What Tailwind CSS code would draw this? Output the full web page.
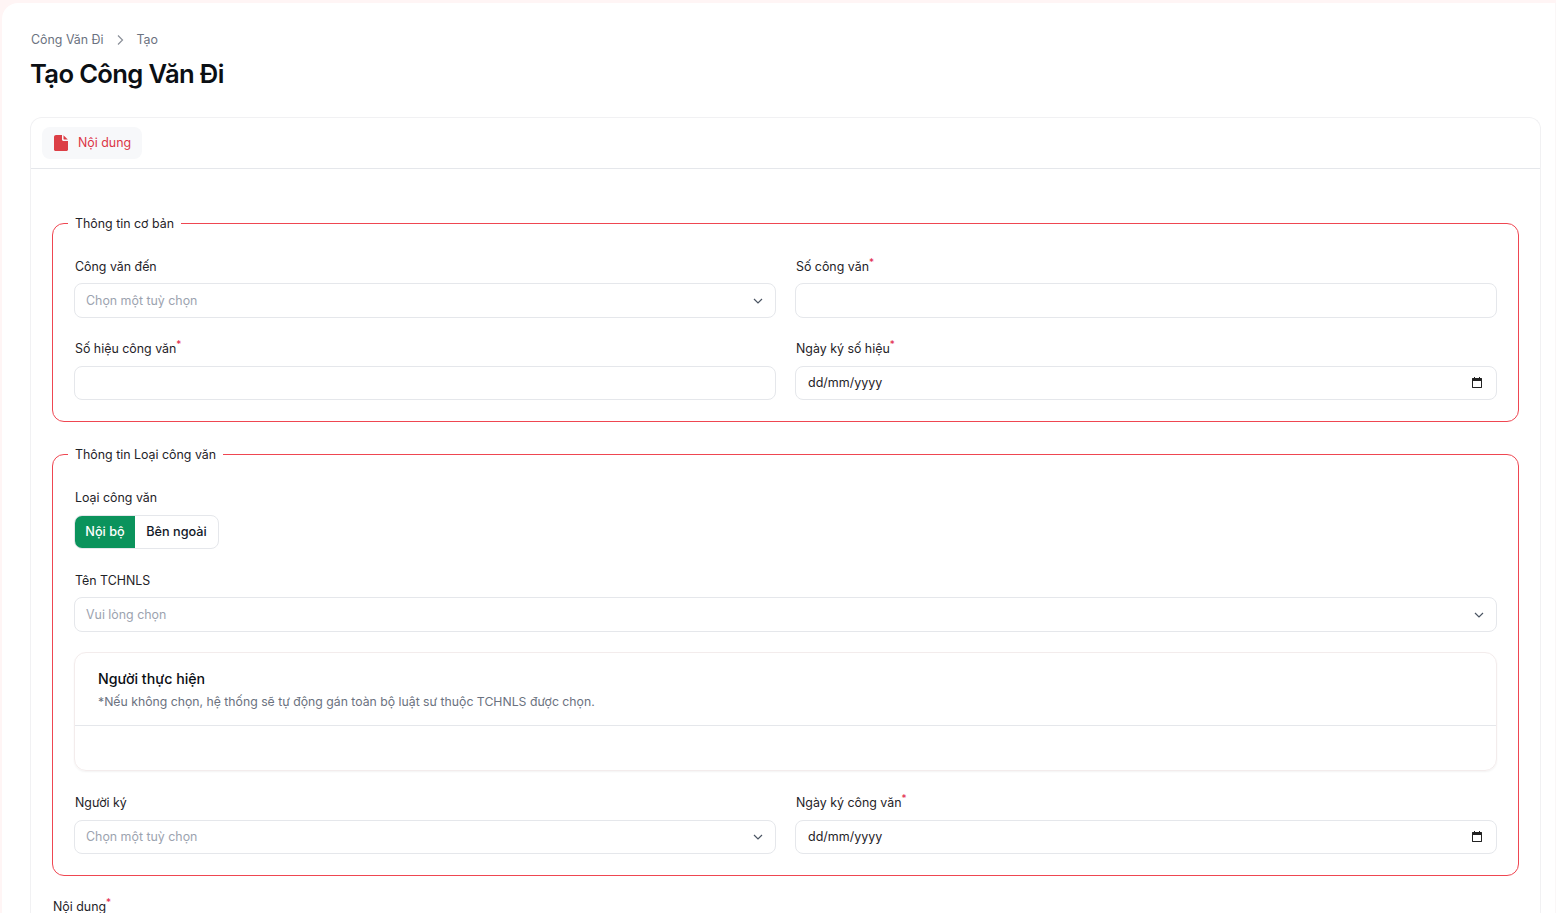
<!DOCTYPE html>
<html lang="vi">
<head>
<meta charset="utf-8">
<title>Tạo Công Văn Đi</title>
<script src="https://cdn.jsdelivr.net/npm/@tailwindcss/browser@4"></script>
</head>
<body class="h-[913px] overflow-hidden bg-[#fff5f5] pt-[3px] pl-[2px] font-['Inter','Liberation_Sans',sans-serif] text-[12.4px] leading-5 text-[#1f2328]">
<main class="h-[910px] overflow-hidden rounded-tl-2xl bg-white pl-[28px] pr-[14px] pt-[27px] shadow-[inset_-1px_0_0_#faf7f7]">
  <nav class="flex h-5 items-center text-[#6b7280]">
    <span class="ml-[1px]">Công Văn Đi</span>
    <svg class="mx-[11px] h-[12px] w-[12px]" viewBox="0 0 12 12" fill="none" stroke="#8a8f98" stroke-width="1.2"><path d="M3 1.500 7.500 6 3 10.500"/></svg>
    <span class="ml-[-1px]">Tạo</span>
  </nav>
  <h1 class="mt-[6px] text-[25.6px] font-semibold leading-[36px] tracking-[-0.65px] text-[#0b0f14]">Tạo Công Văn Đi</h1>
  <section class="mt-[25px] w-[1511px] rounded-t-xl border border-b-0 border-[#f1f1f3]">
    <div class="flex h-[51px] items-center border-b border-[#e5e7eb] pl-[11px]">
      <div class="flex h-[32px] items-center gap-[10px] rounded-lg bg-[#f7f8fa] pl-[12px] pr-[11px] text-[#dc3545]">
        <svg class="h-[16px] w-[14px]" viewBox="0 0 14 16" fill="#dc3f46"><path d="M2 0h6v4.500c0 .8.700 1.500 1.500 1.500H14v8.500c0 .8-.7 1.500-1.500 1.500h-11C.7 16 0 15.300 0 14.500V2C0 .9.900 0 2 0Z"/><path d="M9.500 0.300 13.800 4.600H10c-.3 0-.5-.2-.5-.5Z"/></svg>
        <span>Nội dung</span>
      </div>
    </div>
    <div class="px-[21px] pt-[43px]">
      <fieldset class="h-[210px] rounded-xl border border-[#ef4651] px-[21px]">
        <legend class="ml-[-6px] px-[7px] pt-[2px] leading-[20px]">Thông tin cơ bản</legend>
        <div class="mt-[22px] grid grid-cols-2 gap-x-[19px] gap-y-[20px]">
          <div>
            <label class="ml-[1px] block h-5 pt-[1px]">Công văn đến</label>
            <button class="mt-[7px] flex h-[35px] w-full items-center justify-between rounded-lg border border-[#e5e7eb] pl-[11px] pr-[12px] text-[#9ca3af]"><span>Chọn một tuỳ chọn</span><svg class="h-[10px] w-[10px]" viewBox="0 0 10 10" fill="none" stroke="#4b5563" stroke-width="1.200"><path d="M1 3 5 7 9 3"/></svg></button>
          </div>
          <div>
            <label class="ml-[1px] block h-5 pt-[1px]">Số công văn<sup class="text-[10px] leading-none text-[#e11d48]">*</sup></label>
            <input class="mt-[7px] block h-[35px] w-full rounded-lg border border-[#e5e7eb]" type="text">
          </div>
          <div>
            <label class="ml-[1px] block h-5 pt-[1px]">Số hiệu công văn<sup class="text-[10px] leading-none text-[#e11d48]">*</sup></label>
            <input class="mt-[8px] block h-[34px] w-full rounded-lg border border-[#e5e7eb]" type="text">
          </div>
          <div>
            <label class="ml-[1px] block h-5 pt-[1px]">Ngày ký số hiệu<sup class="text-[10px] leading-none text-[#e11d48]">*</sup></label>
            <div class="mt-[8px] flex h-[34px] items-center justify-between rounded-lg border border-[#e5e7eb] pl-[12px] pr-[13px]"><span class="text-[12.5px]">dd/mm/yyyy</span><svg class="h-[12px] w-[12px]" viewBox="0 0 12 12"><path fill="#222" d="M2 1h1V0h1v1h4V0h1v1h1.500c.3 0 .5.200.5.500v9c0 .3-.2.500-.5.500h-9c-.3 0-.5-.2-.5-.5v-9c0-.3.200-.5.500-.5Z"/><rect x="2" y="4" width="8" height="6" fill="#fff"/></svg></div>
          </div>
        </div>
      </fieldset>
      <fieldset class="mt-[21px] h-[433px] rounded-xl border border-[#ef4651] px-[21px]">
        <legend class="ml-[-6px] px-[7px] pt-[2px] leading-[20px]">Thông tin Loại công văn</legend>
        <label class="ml-[1px] mt-[22px] block h-5 pt-[1px]">Loại công văn</label>
        <div class="mt-[8px] flex h-[34px] w-[145px] overflow-hidden rounded-lg border border-[#e5e7eb] text-[12.7px] font-medium">
          <span class="flex w-[60px] items-center justify-center bg-[#0b935c] text-white">Nội bộ</span>
          <span class="flex flex-1 items-center justify-center text-[#111827]">Bên ngoài</span>
        </div>
        <label class="ml-[1px] mt-[21px] block h-5 pt-[1px]">Tên TCHNLS</label>
        <button class="mt-[7px] flex h-[35px] w-full items-center justify-between rounded-lg border border-[#e5e7eb] pl-[11px] pr-[12px] text-[#9ca3af]"><span>Vui lòng chọn</span><svg class="h-[10px] w-[10px]" viewBox="0 0 10 10" fill="none" stroke="#4b5563" stroke-width="1.200"><path d="M1 3 5 7 9 3"/></svg></button>
        <div class="mt-[20px] h-[119px] rounded-xl border border-[#f3ecec] shadow-[0_1px_2px_rgba(0,0,0,0.05)]">
          <div class="h-[73px] border-b border-[#e5e7eb] pl-[22px] pr-[22px] pt-[16px]">
            <h2 class="ml-[1px] text-[14.2px] font-medium leading-5 text-[#0b0f14]">Người thực hiện</h2>
            <p class="ml-[1px] mt-[3px] text-[12.25px] text-[#6b7280]">*Nếu không chọn, hệ thống sẽ tự động gán toàn bộ luật sư thuộc TCHNLS được chọn.</p>
          </div>
        </div>
        <div class="mt-[21px] grid grid-cols-2 gap-x-[19px]">
          <div>
            <label class="ml-[1px] block h-5 pt-[1px]">Người ký</label>
            <button class="mt-[8px] flex h-[34px] w-full items-center justify-between rounded-lg border border-[#e5e7eb] pl-[11px] pr-[12px] text-[#9ca3af]"><span>Chọn một tuỳ chọn</span><svg class="h-[10px] w-[10px]" viewBox="0 0 10 10" fill="none" stroke="#4b5563" stroke-width="1.200"><path d="M1 3 5 7 9 3"/></svg></button>
          </div>
          <div>
            <label class="ml-[1px] block h-5 pt-[1px]">Ngày ký công văn<sup class="text-[10px] leading-none text-[#e11d48]">*</sup></label>
            <div class="mt-[8px] flex h-[34px] items-center justify-between rounded-lg border border-[#e5e7eb] pl-[12px] pr-[13px]"><span class="text-[12.5px]">dd/mm/yyyy</span><svg class="h-[12px] w-[12px]" viewBox="0 0 12 12"><path fill="#222" d="M2 1h1V0h1v1h4V0h1v1h1.500c.3 0 .5.200.5.500v9c0 .3-.2.500-.5.500h-9c-.3 0-.5-.2-.5-.5v-9c0-.3.200-.5.500-.5Z"/><rect x="2" y="4" width="8" height="6" fill="#fff"/></svg></div>
          </div>
        </div>
      </fieldset>
      <label class="ml-[1px] mt-[21px] block h-5">Nội dung<sup class="text-[10px] leading-none text-[#e11d48]">*</sup></label>
    </div>
  </section>
</main>
</body>
</html>
